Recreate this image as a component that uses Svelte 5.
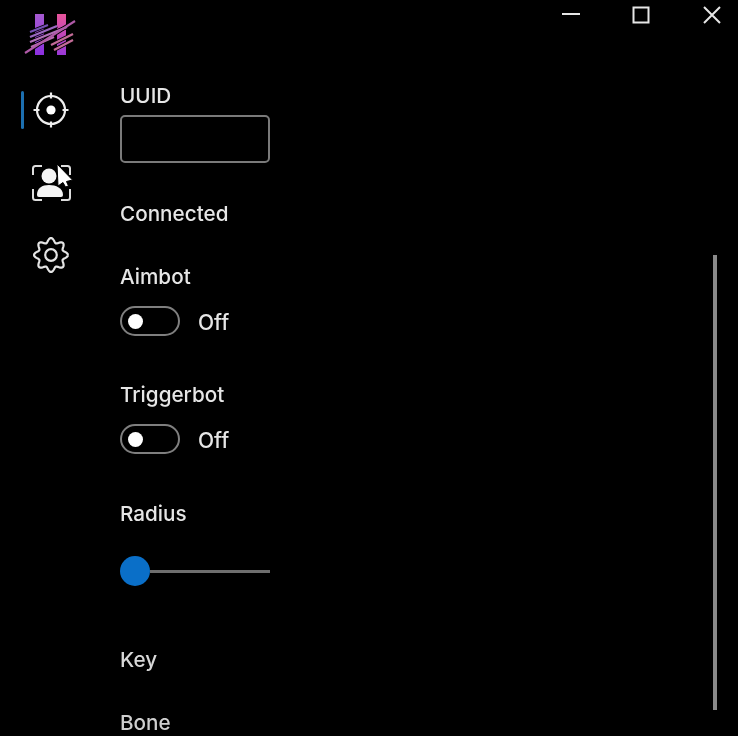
<script>
  const toggles = [
    { label: 'Aimbot', state: 'Off' },
    { label: 'Triggerbot', state: 'Off' }
  ];

  // eight soft lobes round the settings cog
  const gearPath = Array.from({ length: 97 }, (_, i) => {
    const a = (i / 96) * Math.PI * 2;
    const r = 14.8 + 2.2 * Math.cos(8 * a);
    const x = 18 + r * Math.cos(a);
    const y = 18 + r * Math.sin(a);
    return `${i === 0 ? 'M' : 'L'}${x.toFixed(2)} ${y.toFixed(2)}`;
  }).join(' ');

  const stripes = [
    { d: 'M10 22 L28 15', color: '#7450b4' },
    { d: 'M10 27 L37 16', color: '#9a68c0' },
    { d: 'M10 32 L47 17', color: '#b070b8' },
    { d: 'M11 37 L34 27', color: '#b870b0' },
    { d: 'M31 35 L53 24', color: '#c46c98' },
    { d: 'M34 40 L53 30', color: '#c46c98' },
    { d: 'M5 43 L55 11', color: '#b05aa8' }
  ];
</script>

<div class="window">
  <nav class="sidebar">
    <svg class="logo" viewBox="0 0 60 50" width="60" height="50" aria-hidden="true">
      <defs>
        <linearGradient id="barA" x1="0" y1="0" x2="0" y2="1">
          <stop offset="0" stop-color="#a55ad0" />
          <stop offset="1" stop-color="#8c2fe0" />
        </linearGradient>
        <linearGradient id="barB" x1="0" y1="0" x2="0" y2="1">
          <stop offset="0" stop-color="#e8559a" />
          <stop offset="1" stop-color="#9a38d8" />
        </linearGradient>
      </defs>
      <rect x="15" y="4" width="9" height="41" fill="url(#barA)" />
      <rect x="37" y="4" width="9" height="41" fill="url(#barB)" />
      <g fill="none">
        {#each stripes as stripe}
          <path d={stripe.d} stroke="#000" stroke-width="4" />
        {/each}
        {#each stripes as stripe}
          <path d={stripe.d} stroke={stripe.color} stroke-width="2.2" />
        {/each}
      </g>
    </svg>

    <a class="nav-item active" href="#aim" aria-label="Aim">
      <svg viewBox="0 0 36 36" width="36" height="36" fill="none" stroke="#eee" stroke-width="2.2">
        <circle cx="18" cy="18" r="14" />
        <circle cx="18" cy="18" r="4.6" fill="#fff" stroke="none" />
        <path d="M18 0.5v6M18 29.5v6M0.5 18h6M29.5 18h6" />
      </svg>
    </a>
    <a class="nav-item" href="#profile" aria-label="Profile">
      <svg viewBox="0 0 44 40" width="44" height="40" fill="none" stroke="#ddd" stroke-width="2">
        <path d="M4 13V6.500Q4 4 6.500 4H13M32 4H38.500Q41 4 41 6.500V13M4 27v8.500Q4 38 6.500 38H13M32 38h6.500Q41 38 41 35.500V27" />
        <circle cx="20" cy="14" r="7.500" fill="#f4f4f4" stroke="none" />
        <path d="M8 33c0-7 5-10 12-10s14 3 14 10q0 2-2 2H10q-2 0-2-2z" fill="#f4f4f4" stroke="none" />
        <path d="M28 2L29 24L34 20.500L36.500 25L39.500 24L37.500 19.500L43.500 18Z" fill="#fff" stroke="#000" stroke-width="1" stroke-linejoin="round" />
      </svg>
    </a>
    <a class="nav-item" href="#settings" aria-label="Settings">
      <svg viewBox="0 0 36 36" width="36" height="36" fill="none" stroke="#e4e4e4" stroke-width="2.2" stroke-linejoin="round">
        <circle cx="18" cy="18" r="5.800" />
        <path d={gearPath} />
      </svg>
    </a>
  </nav>

  <main class="content">
    <label class="label uuid-label" for="uuid">UUID</label>
    <input id="uuid" class="text-input" type="text" />

    <p class="label connected">Connected</p>

    {#each toggles as toggle}
      <section class="toggle-group">
        <p class="label">{toggle.label}</p>
        <div class="toggle-row">
          <span class="toggle"><span class="knob"></span></span>
          <span class="state">{toggle.state}</span>
        </div>
      </section>
    {/each}

    <p class="label radius">Radius</p>
    <div class="slider">
      <span class="thumb"></span>
      <span class="track"></span>
    </div>

    <p class="label key">Key</p>
    <p class="label bone">Bone</p>
  </main>

  <div class="controls">
    <svg viewBox="0 0 198 30" width="198" height="30" fill="none" stroke="#e6e6e6" stroke-width="2">
      <path d="M22 14h18" />
      <rect x="93.500" y="7.500" width="15" height="15" />
      <path d="M164 7l16 16M180 7l-16 16" />
    </svg>
  </div>

  <div class="scrollbar"></div>
</div>

<style>
  :global(body) {
    margin: 0;
    background: #000;
  }

  .window {
    position: relative;
    display: flex;
    height: 736px;
    overflow: hidden;
    background: #000;
    color: #e8e8e8;
    font-family: "Inter", "Open Sans", sans-serif;
    filter: blur(0.5px);
  }

  .sidebar {
    width: 120px;
    flex: none;
    display: flex;
    flex-direction: column;
    align-items: flex-start;
  }

  .logo {
    margin: 10px 0 0 20px;
  }

  .nav-item {
    position: relative;
    display: flex;
    align-items: center;
    justify-content: center;
    width: 102px;
    height: 36px;
    margin-bottom: 37px;
  }

  .nav-item.active {
    margin-top: 32px;
    margin-bottom: 36px;
  }

  .nav-item.active::before {
    content: "";
    position: absolute;
    left: 21px;
    top: -1px;
    width: 3px;
    height: 38px;
    border-radius: 2px;
    background: #1c6fb0;
  }

  .content {
    flex: 1;
    padding-top: 82px;
    overflow: hidden;
  }

  .label {
    display: block;
    margin: 0;
    height: 28px;
    line-height: 28px;
    font-size: 20.7px;
    font-weight: 500;
    color: #e6e6e6;
  }

  .text-input {
    display: block;
    box-sizing: border-box;
    width: 150px;
    height: 48px;
    margin: 5px 0 0;
    border: 2px solid #7a7a7a;
    border-radius: 5px;
    background: transparent;
  }

  .connected {
    margin-top: 37px;
  }

  .toggle-group {
    margin-top: 35px;
    height: 84px;
  }

  .toggle-group + .toggle-group {
    margin-top: 34px;
  }

  .toggle-row {
    display: flex;
    align-items: center;
    gap: 18px;
    margin-top: 15px;
  }

  .toggle {
    box-sizing: border-box;
    display: flex;
    align-items: center;
    width: 60px;
    height: 30px;
    padding-left: 6px;
    border: 2px solid #7f7f7f;
    border-radius: 15px;
  }

  .knob {
    width: 15px;
    height: 15px;
    border-radius: 50%;
    background: #fff;
  }

  .state {
    padding-top: 3px;
    font-size: 21px;
    font-weight: 500;
    color: #e6e6e6;
  }

  .radius {
    margin-top: 35px;
  }

  .slider {
    display: flex;
    align-items: center;
    width: 150px;
    margin-top: 28px;
  }

  .thumb {
    flex: none;
    width: 30px;
    height: 30px;
    border-radius: 50%;
    background: #0a6fc8;
  }

  .track {
    flex: 1;
    height: 3px;
    background: #6e6e6e;
  }

  .key {
    margin-top: 60px;
    color: #d8d8d8;
  }

  .bone {
    margin-top: 35px;
    color: #cfcfcf;
  }

  .controls {
    position: absolute;
    top: 0;
    right: 0;
    line-height: 0;
  }

  .scrollbar {
    position: absolute;
    left: 713px;
    top: 255px;
    width: 4px;
    height: 455px;
    background: #8a8a8a;
  }
</style>
